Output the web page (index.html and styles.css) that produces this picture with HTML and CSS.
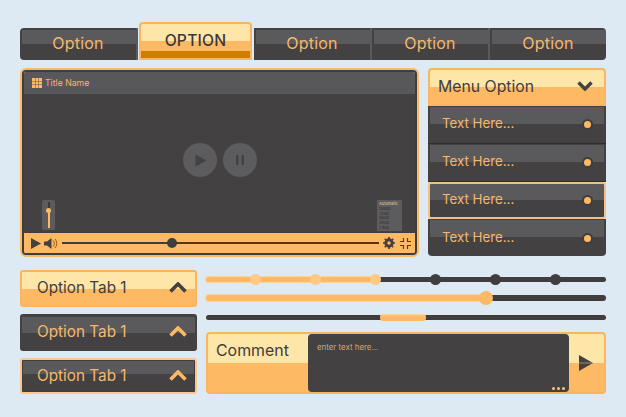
FILE: index.html
```html
<!DOCTYPE html>
<html lang="en">

<head>
    <meta charset="UTF-8">
    <meta name="viewport" content="width=device-width, initial-scale=1.0">
    <title>UI Kit</title>
    <link rel="stylesheet" href="styles.css">
</head>

<body>
    <nav class="nav">
        <a class="nav-tab">Option</a>
        <a class="nav-tab active">OPTION</a>
        <a class="nav-tab">Option</a>
        <a class="nav-tab">Option</a>
        <a class="nav-tab">Option</a>
    </nav>

    <div class="row-main">
        <section class="player">
            <div class="player-frame">
                <div class="player-title">
                    <svg class="grid-icon" width="10" height="10" viewBox="0 0 10 10">
                        <path d="M0 0h3v3H0zM3.5 0h3v3h-3zM7 0h3v3H7zM0 3.5h3v3H0zM3.5 3.5h3v3h-3zM7 3.5h3v3H7zM0 7h3v3H0zM3.5 7h3v3h-3zM7 7h3v3H7z" fill="#fdb964" />
                    </svg>
                    <span>Title Name</span>
                </div>
                <div class="player-screen">
                    <div class="big-buttons">
                        <span class="big-btn">
                            <svg class="play-icon" width="12" height="13" viewBox="0 0 12 13"><path d="M0.5 0.5l11 6-11 6z" fill="#434142" /></svg>
                        </span>
                        <span class="big-btn">
                            <svg width="10" height="10" viewBox="0 0 10 10"><path d="M1 0h2.4v10H1zM6.6 0H9v10H6.6z" fill="#434142" /></svg>
                        </span>
                    </div>
                    <div class="volume-pop">
                        <div class="volume-track"><span class="volume-knob"></span></div>
                    </div>
                    <ul class="quality">
                        <li class="quality-head">Automatic</li>
                        <li>1080p</li>
                        <li>720p</li>
                        <li>480p</li>
                        <li>360p</li>
                        <li>240p</li>
                    </ul>
                </div>
                <div class="player-controls">
                    <svg width="10" height="11" viewBox="0 0 10 11"><path d="M0 0l10 5.5L0 11z" fill="#434142" /></svg>
                    <svg width="15" height="11" viewBox="0 0 15 11">
                        <path d="M0 3.5h3L7.5 0v11L3 7.5H0z" fill="#434142" />
                        <path d="M9 2.5a4 4 0 0 1 0 6M11 1a6.5 6.5 0 0 1 0 9" fill="none" stroke="#9a5c10" stroke-width="1" />
                    </svg>
                    <div class="seek">
                        <span class="seek-knob"></span>
                    </div>
                    <svg width="12" height="12" viewBox="0 0 11 11">
                        <circle cx="5.5" cy="5.5" r="3.2" fill="none" stroke="#434142" stroke-width="2.2" />
                        <path d="M5.5 0v11M0 5.5h11M1.6 1.6l7.8 7.8M9.4 1.6l-7.8 7.8" stroke="#434142" stroke-width="1.6" />
                        <circle cx="5.5" cy="5.5" r="1.6" fill="#fdb964" />
                    </svg>
                    <svg class="shrink-icon" width="11" height="11" viewBox="0 0 11 11">
                        <path d="M3.5 0v3.5H0M7.5 0v3.5H11M3.5 11V7.5H0M7.5 11V7.5H11" fill="none" stroke="#434142" stroke-width="1.2" />
                    </svg>
                </div>
            </div>
        </section>

        <aside class="menu">
            <div class="menu-head">
                <span>Menu Option</span>
                <svg width="16" height="10" viewBox="0 0 16 10"><path d="M1.5 1.5L8 8l6.5-6.5" fill="none" stroke="#434142" stroke-width="3.4" /></svg>
            </div>
            <div class="menu-item"><span>Text Here...</span><i class="dot"></i></div>
            <div class="menu-item"><span>Text Here...</span><i class="dot"></i></div>
            <div class="menu-item selected"><span>Text Here...</span><i class="dot"></i></div>
            <div class="menu-item last"><span>Text Here...</span><i class="dot"></i></div>
        </aside>
    </div>

    <div class="row-bottom">
        <div class="option-tabs">
            <div class="option-tab light">
                <span>Option Tab 1</span>
                <svg width="18" height="11" viewBox="0 0 18 11"><path d="M1.5 9.5L9 2l7.5 7.5" fill="none" stroke="#434142" stroke-width="3.6" /></svg>
            </div>
            <div class="option-tab dark">
                <span>Option Tab 1</span>
                <svg width="18" height="11" viewBox="0 0 18 11"><path d="M1.5 9.5L9 2l7.5 7.5" fill="none" stroke="#fdb964" stroke-width="3.6" /></svg>
            </div>
            <div class="option-tab dark outlined">
                <span>Option Tab 1</span>
                <svg width="18" height="11" viewBox="0 0 18 11"><path d="M1.5 9.5L9 2l7.5 7.5" fill="none" stroke="#fdb964" stroke-width="3.6" /></svg>
            </div>
        </div>

        <div class="right-col">
            <div class="slider">
                <div class="slider-fill" style="width: 42.25%"></div>
                <span class="step on" style="left: 12.25%"></span>
                <span class="step on" style="left: 27.25%"></span>
                <span class="step on" style="left: 42.25%"></span>
                <span class="step" style="left: 57.25%"></span>
                <span class="step" style="left: 72.25%"></span>
                <span class="step" style="left: 87.25%"></span>
            </div>
            <div class="slider thick">
                <div class="slider-fill" style="width: 70%"></div>
                <span class="thumb" style="left: 70%"></span>
            </div>
            <div class="slider">
                <span class="range" style="left: 43.5%; width: 11.5%"></span>
            </div>

            <div class="comment">
                <div class="comment-label">Comment</div>
                <div class="comment-box">
                    <span>enter text here...</span>
                    <div class="comment-dots"><i></i><i></i><i></i></div>
                </div>
                <div class="comment-send">
                    <svg width="14" height="16" viewBox="0 0 14 16">
                        <path d="M0 0l14 8L0 16z" fill="#434142" />
                        <path d="M0 8h13" stroke="#c79a5c" stroke-width="0.8" />
                    </svg>
                </div>
            </div>
        </div>
    </div>
</body>

</html>
```

FILE: styles.css
```css
* {
    box-sizing: border-box;
}

body {
    margin: 0;
    padding: 22px 20px 0;
    height: 417px;
    overflow: hidden;
    background: #dde9f3;
    font-family: Inter, "Open Sans", sans-serif;
    color: #f6b76c;
}

svg {
    display: block;
    flex-shrink: 0;
}

/* top navigation */
.nav {
    display: flex;
    align-items: flex-end;
    height: 38px;
}

.nav-tab {
    flex: 1;
    height: 32px;
    padding-bottom: 2px;
    display: flex;
    align-items: center;
    justify-content: center;
    font-size: 16px;
    letter-spacing: 0.2px;
    background: linear-gradient(#5a5a5c, #5a5a5c) 2px 2px / calc(100% - 2px) 14px no-repeat, #434142;
    border-right: 2px solid #5a5a5c;
}

.nav-tab:first-child {
    border-radius: 4px 0 0 4px;
}

.nav-tab:last-child {
    border-radius: 0 4px 4px 0;
    border-right: 0;
}

.nav-tab.active {
    flex: 0 0 113px;
    height: 38px;
    margin: 0 2px 0 1px;
    padding-bottom: 2px;
    font-size: 15.7px;
    color: #3b393a;
    font-weight: 500;
    border: 2px solid #fcb45f;
    border-radius: 4px 4px 0 0;
    background: linear-gradient(#fee5a8 17px, #fdb964 17px 27px, #cf7f00 27px);
}

/* video player */
.row-main {
    display: flex;
    gap: 9px;
    margin-top: 8px;
}

.player {
    width: 399px;
    height: 189px;
    border: 2px solid #fdb964;
    border-radius: 6px;
}

.player-frame {
    height: 100%;
    display: flex;
    flex-direction: column;
    border: 2px solid #3f3d3e;
    border-radius: 4px;
    overflow: hidden;
}

.player-title {
    height: 22px;
    flex-shrink: 0;
    display: flex;
    align-items: center;
    gap: 3px;
    padding-left: 8px;
    font-size: 8.7px;
    background: #58585a;
}

.player-screen {
    flex: 1;
    position: relative;
    display: flex;
    align-items: center;
    justify-content: center;
    background: #434142;
}

.big-buttons {
    display: flex;
    gap: 6px;
    margin-bottom: 6px;
}

.big-btn {
    width: 34px;
    height: 34px;
    border-radius: 50%;
    background: #5c5c5e;
    display: flex;
    align-items: center;
    justify-content: center;
}

.play-icon {
    margin-left: 2px;
}

.volume-pop {
    position: absolute;
    left: 18px;
    bottom: 2px;
    width: 13px;
    height: 30px;
    padding: 2px 0;
    background: #5c5c5e;
    border-radius: 2px;
}

.volume-track {
    position: relative;
    width: 2px;
    height: 100%;
    margin: 0 auto;
    background: linear-gradient(#3b393a 30%, #fdb964 30%);
}

.volume-knob {
    position: absolute;
    left: -1.5px;
    top: 6px;
    width: 5px;
    height: 5px;
    border-radius: 50%;
    background: #fdb964;
}

.quality {
    position: absolute;
    right: 13px;
    bottom: 1px;
    width: 25px;
    height: 31px;
    margin: 0;
    padding: 2px 0 0 2px;
    list-style: none;
    background: #5c5c5e;
    color: #2f2d2e;
    font-size: 4px;
    line-height: 4.8px;
}

.quality-head {
    color: #e9c79c;
}

.player-controls {
    height: 21px;
    flex-shrink: 0;
    display: flex;
    align-items: center;
    gap: 3px;
    padding: 0 4px 0 7px;
    background: #fdb964;
    border-top: 1px solid #3f3d3e;
}

.seek {
    flex: 1;
    position: relative;
    height: 2.5px;
    margin: 0 1px 0 0;
    background: linear-gradient(to right, #3f3d3e 115px, #5e3306 115px);
}

.seek-knob {
    position: absolute;
    left: 105px;
    top: -4px;
    width: 10px;
    height: 10px;
    border-radius: 50%;
    background: #3f3d3e;
}

.shrink-icon {
    margin-left: 2px;
}

/* dropdown menu */
.menu {
    flex: 1;
    display: flex;
    flex-direction: column;
}

.menu-head {
    height: 38px;
    flex-shrink: 0;
    display: flex;
    align-items: center;
    justify-content: space-between;
    padding: 0 11px 2px 8px;
    font-size: 15.8px;
    color: #3f3d3e;
    border: 2px solid #fcb45f;
    border-radius: 4px 4px 0 0;
    background: linear-gradient(#fee5a8 17px, #fdb964 17px);
}

.menu-item {
    height: 38px;
    flex-shrink: 0;
    display: flex;
    align-items: center;
    justify-content: space-between;
    padding: 0 15px 3px 14px;
    font-size: 13.3px;
    background: linear-gradient(#5a5a5c, #5a5a5c) 2px 1px / calc(100% - 4px) 17px no-repeat, #434142;
    border-bottom: 1px solid #2f2d2e;
}

.menu-item.selected {
    height: 37px;
    border: 2px solid #f3c083;
    border-radius: 3px;
    padding: 0 13px 3px 12px;
    background: linear-gradient(#5a5a5c, #5a5a5c) 0 0 / 100% 16px no-repeat, #434142;
}

.menu-item.last {
    height: 37px;
    padding-bottom: 1px;
    border-bottom: 0;
    border-radius: 0 0 4px 4px;
}

.dot {
    width: 7px;
    height: 7px;
    margin-top: 2px;
    border-radius: 50%;
    background: #fdb964;
    box-shadow: 0 0 0 2px #3f3d3e;
}

/* bottom area */
.row-bottom {
    display: flex;
    gap: 9px;
    margin-top: 13px;
}

.option-tabs {
    width: 177px;
    display: flex;
    flex-direction: column;
    gap: 7px;
}

.option-tab {
    height: 37px;
    display: flex;
    align-items: center;
    justify-content: space-between;
    padding: 0 10px 3px 17px;
    font-size: 15.3px;
    border-radius: 3px;
}

.option-tab.light {
    color: #3f3d3e;
    padding: 0 8px 3px 15px;
    border: 2px solid #fcb45f;
    background: linear-gradient(#fee5a8 17px, #fdb964 17px);
}

.option-tab.dark {
    background: linear-gradient(#5a5a5c, #5a5a5c) 2px 3px / calc(100% - 4px) 16px no-repeat, #434142;
}

.option-tab.outlined {
    height: 36px;
    padding: 0 8px 1px 15px;
    border: 2px solid #f8c68e;
    box-shadow: inset 0 0 0 1px #3f3d3e;
    background: linear-gradient(#5a5a5c, #5a5a5c) 0 0 / 100% 14px no-repeat, #434142;
}

.right-col {
    flex: 1;
    display: flex;
    flex-direction: column;
    padding-top: 7px;
}

.slider {
    position: relative;
    height: 5px;
    margin-bottom: 14px;
    border-radius: 3px;
    background: #3f3d3e;
}

.slider.thick {
    height: 6px;
    margin-top: -1px;
}

.slider-fill {
    height: 100%;
    border-radius: 3px;
    background: #fdb964;
    box-shadow: 0 0 0 1px #fcd59b;
}

.step {
    position: absolute;
    top: -3px;
    width: 11px;
    height: 11px;
    margin-left: -5px;
    border-radius: 50%;
    background: #3f3d3e;
}

.step.on {
    background: #fdc985;
}

.thumb {
    position: absolute;
    top: -4px;
    width: 14px;
    height: 14px;
    margin-left: -7px;
    border-radius: 50%;
    background: #fdb964;
}

.range {
    position: absolute;
    top: -1px;
    height: 7px;
    border-radius: 3px;
    background: linear-gradient(#fcd59b, #fdb964 40%);
}

/* comment box */
.comment {
    height: 62px;
    margin-top: -2px;
    display: flex;
    border: 2px solid #fcb45f;
    border-radius: 4px;
    background: linear-gradient(#fee5a8 29px, #fdb964 29px);
}

.comment-label {
    width: 100px;
    padding: 7px 0 0 8px;
    font-size: 15.9px;
    color: #3f3d3e;
}

.comment-box {
    position: relative;
    width: 261px;
    padding: 8px 9px;
    font-size: 7.9px;
    border-radius: 4px;
    background: #434142;
    color: #d9a66a;
}

.comment-dots {
    position: absolute;
    right: 4px;
    bottom: 2px;
    display: flex;
    gap: 2px;
}

.comment-dots i {
    width: 3px;
    height: 3px;
    border-radius: 50%;
    background: #f6c48a;
}

.comment-send {
    flex: 1;
    display: flex;
    align-items: center;
    justify-content: center;
    padding-right: 2px;
}
```
